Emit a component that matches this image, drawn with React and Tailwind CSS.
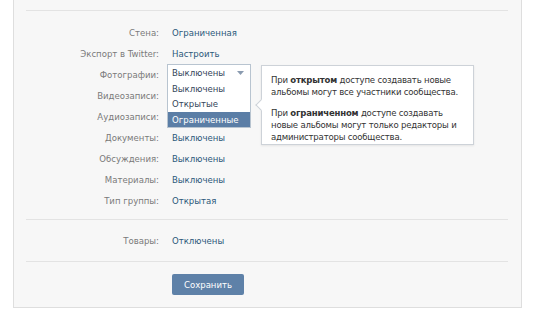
import React from "react";

const rows = [
  ["Стена:", "Ограниченная"],
  ["Экспорт в Twitter:", "Настроить"],
  ["Фотографии:", "Выключены"],
  ["Видеозаписи:", "Выключены", true],
  ["Аудиозаписи:", "Выключены", true],
  ["Документы:", "Выключены"],
  ["Обсуждения:", "Выключены"],
  ["Материалы:", "Выключены"],
  ["Тип группы:", "Открытая"],
];

function Row({ label, value, hidden }) {
  return (
    <div className="flex h-[21px] items-center">
      <div className="w-[145px] shrink-0 text-right text-[#7a7a7a]">{label}</div>
      <div className={hidden ? "invisible ml-[13px] text-[#2b587a]" : "ml-[13px] text-[#2b587a]"}>{value}</div>
    </div>
  );
}

export default function App() {
  return (
    <div
      className="relative h-[314px] w-[537px] overflow-hidden bg-white text-[9.5px] leading-[12px]"
      style={{ fontFamily: '"DejaVu Sans Condensed", "Liberation Sans", sans-serif' }}
    >
      <div className="ml-[13px] flex w-[509px] flex-col border-x border-b border-[#dedede] bg-[#f7f7f7] pb-[12px] pt-[10px]">
        <div className="ml-[12px] mr-[13px] h-px bg-[#e3e3e3]" />
        <div className="mt-[11px] flex flex-col">
          {rows.map(([l, v, h]) => (
            <Row key={l} label={l} value={v} hidden={h} />
          ))}
        </div>
        <div className="ml-[12px] mr-[13px] mt-[8px] h-px bg-[#e3e3e3]" />
        <div className="mt-[10px]">
          <Row label="Товары:" value="Отключены" />
        </div>
        <div className="ml-[12px] mr-[13px] mt-[10px] h-px bg-[#e3e3e3]" />
        <div className="mt-[12px] pl-[158px]">
          <button className="h-[21px] w-[72px] rounded-[2px] bg-[#5e81a8] text-white">
            Сохранить
          </button>
        </div>
      </div>

      {/* dropdown */}
      <div className="absolute left-[167px] top-[64px] w-[84px] border border-[#b8c4d0] bg-white text-[#34465a]">
        <div className="flex h-[16px] items-center justify-between pl-[4px] pr-[6px]">
          <span>Выключены</span>
          <svg width="7" height="4" viewBox="0 0 7 4">
            <path d="M0 0 H7 L3.5 4 Z" fill="#8a9bb0" />
          </svg>
        </div>
        <div className="flex h-[15px] items-center pl-[4px]">Выключены</div>
        <div className="flex h-[16px] items-center pl-[4px]">Открытые</div>
        <div className="flex h-[15px] items-center bg-[#5b7ea6] pl-[4px] text-white">Ограниченные</div>
      </div>

      {/* tooltip */}
      <div className="absolute left-[261px] top-[65px] h-[80px] w-[213px] border border-[#cdd2d8] bg-white pl-[9px] pt-[8px] text-[#333] tracking-[-0.2px] shadow-[0_1px_2px_rgba(0,0,0,0.08)]">
        <div className="absolute left-[-5px] top-[35px] h-[8px] w-[8px] rotate-45 border-b border-l border-[#cdd2d8] bg-white" />
        <p className="whitespace-nowrap leading-[12px]">
          При <b>открытом</b> доступе создавать новые
          <br />
          альбомы могут все участники сообщества.
        </p>
        <p className="mt-[9px] whitespace-nowrap leading-[12px]">
          При <b>ограниченном</b> доступе создавать
          <br />
          новые альбомы могут только редакторы и
          <br />
          администраторы сообщества.
        </p>
      </div>
    </div>
  );
}
